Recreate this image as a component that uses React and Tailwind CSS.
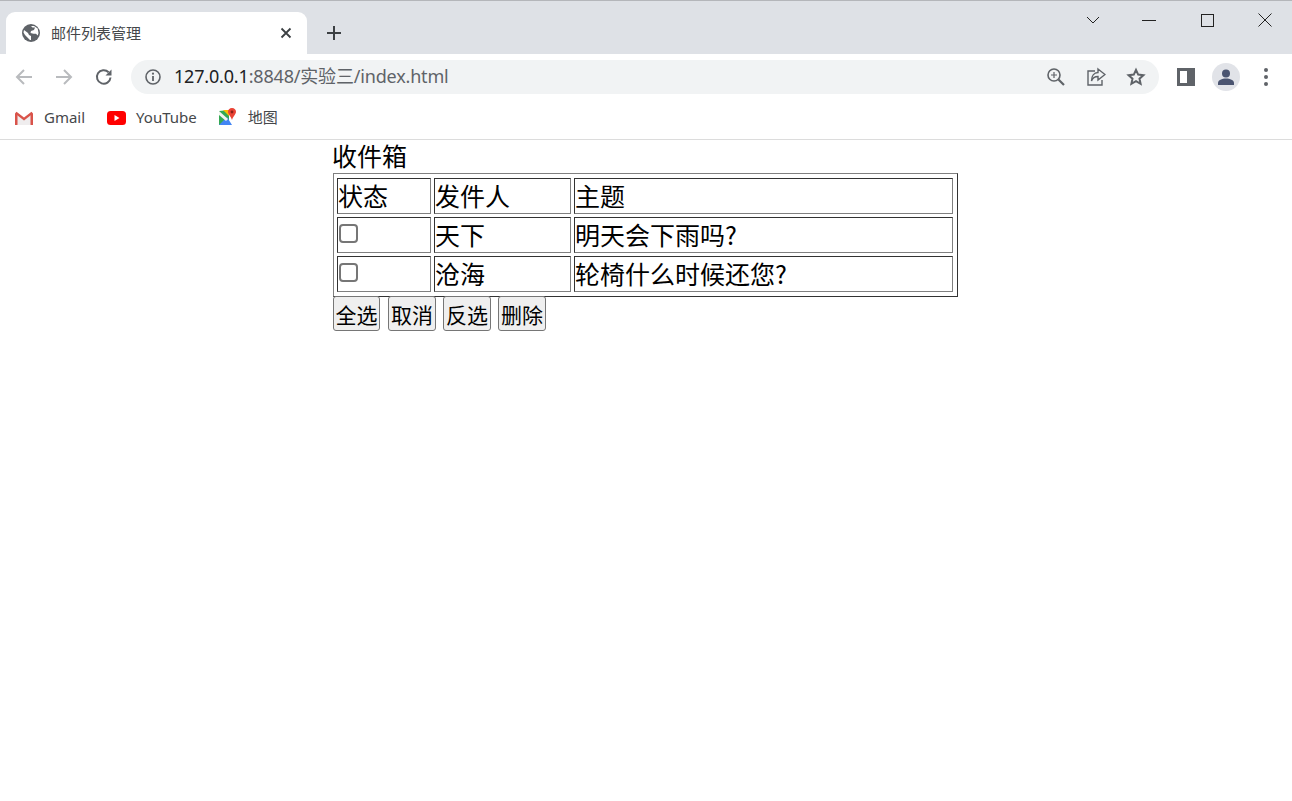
import React from "react";

const ui = { fontFamily: '"Noto Sans","Noto Sans CJK SC",sans-serif' };
const page = { fontFamily: '"Noto Sans CJK SC","Liberation Sans",sans-serif' };

function Globe() {
  return (
    <svg width="18" height="18" viewBox="0 0 18 18">
      <circle cx="9" cy="9" r="9" fill="#5f6368" />
      <path d="M2 6l4 3 1 2 2 1v4H8L3 11 1.500 8.500zM9 2l1.500 1.500h2.500l-1 2.500-3 1-.5 2 3 .8h2.500l1.700 1.700.8-2.500-.8-4.500L12 2z" fill="#fff" />
    </svg>
  );
}

function Gmail() {
  return (
    <svg width="20" height="16" viewBox="0 0 20 16">
      <path d="M1.500 14.500V3l8.500 6.500L18.500 3v11.500h-3V7.500L10 11.500 4.500 7.500v7z" fill="#ece9ea" />
      <path d="M4 6.500 10 11 16 6.500V15H4z" fill="#efedee" />
      <path d="M1 3.500 2.500 1.800 10 7.600 17.500 1.800 19 3.500 10 10.500z" fill="#d9534a" />
      <path d="M1 3.500H3.500V15H1zM16.500 3.500H19V15h-2.500z" fill="#d9534a" />
    </svg>
  );
}

function YouTube() {
  return (
    <svg width="19" height="14" viewBox="0 0 19 14">
      <rect width="19" height="14" rx="3.500" fill="#f00" />
      <path d="M7.500 4v6l5-3z" fill="#fff" />
    </svg>
  );
}

function Maps() {
  return (
    <svg width="19" height="19" viewBox="0 0 19 19">
      <path d="M1 3l10-1v15H1z" fill="#34a853" />
      <path d="M1 17l8-8 5 8z" fill="#4285f4" />
      <path d="M1 3l9 8-2 2-7-6z" fill="#f4f4f0" />
      <path d="M5 2h6v6z" fill="#fbbc04" />
      <path d="M14 0c-2.500 0-4 1.800-4 3.800 0 2.600 3 4.600 4 8.200 1-3.600 4-5.600 4-8.200C18 1.800 16.500 0 14 0z" fill="#ea4335" />
      <circle cx="14" cy="4" r="1.400" fill="#8c1f17" />
    </svg>
  );
}

function Bookmark({ icon, label }) {
  return (
    <div className="flex items-center gap-[10px]">
      <div className="flex w-[20px] justify-center">{icon}</div>
      <span>{label}</span>
    </div>
  );
}

function Cell({ w, children }) {
  return (
    <td
      style={{ width: w }}
      className="h-[36px] border border-t-[#333333] border-l-[#333333] border-r-[#808080] border-b-[#808080] pt-0 pb-[2px] px-0 align-middle"
    >
      {children}
    </td>
  );
}

function Check() {
  return <div className="ml-px -mt-[1px] h-[19px] w-[19px] rounded-[4px] border-2 border-[#767676] bg-white" />;
}

const rows = [
  ["天下", "明天会下雨吗?"],
  ["沧海", "轮椅什么时候还您?"],
];

export default function App() {
  return (
    <div className="h-[801px] w-[1292px] overflow-hidden bg-white">
      <header className="h-[140px] border-b border-[#dcdcdc]" style={ui}>
        <div className="flex h-[54px] items-end border-t border-[#b4b6ba] bg-[#dee1e6] pl-[6px]">
          <div className="flex h-[42px] w-[301px] items-center rounded-t-[9px] bg-white pl-[16px] pr-[15px]">
            <Globe />
            <span className="ml-[11px] flex-1 text-[15px] leading-[20px] text-[#45474a]">邮件列表管理</span>
            <svg width="12" height="12" viewBox="0 0 12 12" stroke="#3c4043" strokeWidth="1.800" fill="none">
              <path d="M1.500 1.500l9 9M10.500 1.500l-9 9" />
            </svg>
          </div>
          <div className="ml-[19px] mb-[12px] flex h-[18px] w-[16px] items-center">
            <svg width="16" height="16" viewBox="0 0 16 16" stroke="#3c4043" strokeWidth="2" fill="none">
              <path d="M8 1v14M1 8h14" />
            </svg>
          </div>
          <div className="ml-auto mb-[27px] flex items-center pr-[20px]">
            <svg width="14" height="8" viewBox="0 0 14 8" stroke="#222" fill="none" className="mr-[42px]">
              <path d="M1 1l6 6 6-6" />
            </svg>
            <div className="mr-[45px] h-px w-[14px] bg-[#222]" />
            <div className="mr-[44px] h-[13px] w-[13px] border border-[#222]" />
            <svg width="14" height="14" viewBox="0 0 14 14" stroke="#222" fill="none">
              <path d="M.5.500l13 13M13.500.500l-13 13" />
            </svg>
          </div>
        </div>

        <div className="flex h-[46px] items-center bg-white pl-[14px]">
          <svg width="20" height="20" viewBox="0 0 20 20" stroke="#b9bbbe" strokeWidth="2" fill="none">
            <path d="M18 10H3M10 3l-7 7 7 7" />
          </svg>
          <svg width="20" height="20" viewBox="0 0 20 20" stroke="#b9bbbe" strokeWidth="2" fill="none" className="ml-[20px]">
            <path d="M2 10h15M10 3l7 7-7 7" />
          </svg>
          <svg width="20" height="20" viewBox="0 0 20 20" fill="none" className="ml-[20px]">
            <path d="M16.500 10.500a6.800 6.800 0 1 1-1.900-5.300" stroke="#5f6368" strokeWidth="2" />
            <path d="M17.500 2.500v6h-6z" fill="#5f6368" />
          </svg>
          <div className="ml-[17px] flex h-[34px] w-[1028px] items-center rounded-full bg-[#f1f3f4] pl-[14px] pr-[13px]">
            <svg width="16" height="16" viewBox="0 0 16 16" fill="none">
              <circle cx="8" cy="8" r="7" stroke="#5f6368" strokeWidth="1.600" />
              <path d="M8 7v5" stroke="#5f6368" strokeWidth="1.800" />
              <circle cx="8" cy="4.700" r="1.100" fill="#5f6368" />
            </svg>
            <div className="ml-[13px] mb-[2px] flex-1 text-[18px] leading-none tracking-[-0.18px]">
              <span className="text-[#202124]">127.0.0.1</span>
              <span className="text-[#5f6368]">:8848/实验三/index.html</span>
            </div>
            <svg width="20" height="20" viewBox="0 0 20 20" fill="none" stroke="#5f6368">
              <circle cx="8" cy="8" r="6" strokeWidth="1.600" />
              <path d="M12.500 12.500l5.500 5.500" strokeWidth="2.200" />
              <path d="M8 5v6M5 8h6" strokeWidth="1.200" />
            </svg>
            <svg width="20" height="20" viewBox="0 0 20 20" fill="none" stroke="#5f6368" strokeWidth="1.400" className="ml-[20px]">
              <path d="M9 4H2v14h14v-5" />
              <path d="M12 2l7 5.500-7 5.500V9.500C8.500 9.500 6.500 11 5.500 14c0-5 2.500-8.500 6.500-8.500z" />
            </svg>
            <svg width="20" height="20" viewBox="0 0 20 20" fill="none" stroke="#5f6368" strokeWidth="2" className="ml-[20px]">
              <path d="M10 2.800l2.200 4.800 5.200.6-3.900 3.500 1.100 5.100L10 14.200l-4.600 2.600 1.100-5.100L2.600 8.200l5.200-.6z" />
            </svg>
          </div>
          <div className="ml-[18px] flex h-[18px] w-[18px] border-[3px] border-[#5f6368]">
            <div className="flex-1 bg-white" />
            <div className="w-[5px] bg-[#5f6368]" />
          </div>
          <div className="ml-[17px] flex h-[28px] w-[28px] items-center justify-center rounded-full bg-[#e1e3e8]">
            <svg width="16" height="16" viewBox="0 0 16 16" fill="#4a5470">
              <circle cx="8" cy="4.500" r="4" />
              <path d="M0 16v-2c0-3 4-4.500 8-4.500s8 1.500 8 4.500v2z" />
            </svg>
          </div>
          <div className="ml-[24px] flex flex-col gap-[3px]">
            <div className="h-[4px] w-[4px] rounded-full bg-[#5f6368]" />
            <div className="h-[4px] w-[4px] rounded-full bg-[#5f6368]" />
            <div className="h-[4px] w-[4px] rounded-full bg-[#5f6368]" />
          </div>
        </div>

        <div className="flex h-[39px] items-center gap-[21px] pb-[4px] pl-[14px] text-[15px] text-[#45474a]">
          <Bookmark icon={<Gmail />} label="Gmail" />
          <Bookmark icon={<YouTube />} label="YouTube" />
          <Bookmark icon={<Maps />} label="地图" />
        </div>
      </header>

      <main className="ml-[333px] w-[625px] text-black" style={page}>
        <div className="-ml-px h-[33px] text-[25px] leading-[31px]">收件箱</div>
        <table className="w-[625px] table-fixed border-separate border-spacing-[3px] border border-t-[#808080] border-l-[#808080] border-r-[#333333] border-b-[#333333] pt-px pr-px pb-px text-[25px] leading-[32px]">
          <tbody>
            <tr>
              <Cell w="94px"><span>状态</span></Cell>
              <Cell w="137px">发件人</Cell>
              <Cell>主题</Cell>
            </tr>
            {rows.map(([from, subject]) => (
              <tr key={from}>
                <Cell w="94px"><Check /></Cell>
                <Cell w="137px">{from}</Cell>
                <Cell>{subject}</Cell>
              </tr>
            ))}
          </tbody>
        </table>
        <div className="-mt-px flex gap-[7px]">
          {["全选", "取消", "反选", "删除"].map((t, i) => (
            <button
              key={t}
              className={`flex h-[35px] items-center justify-center rounded-[3px] border border-[#767676] bg-[#efefef] pt-[2px] text-[21px] text-black ${i === 0 ? "mr-px w-[47px]" : "w-[48px]"}`}
            >
              {t}
            </button>
          ))}
        </div>
      </main>
    </div>
  );
}
